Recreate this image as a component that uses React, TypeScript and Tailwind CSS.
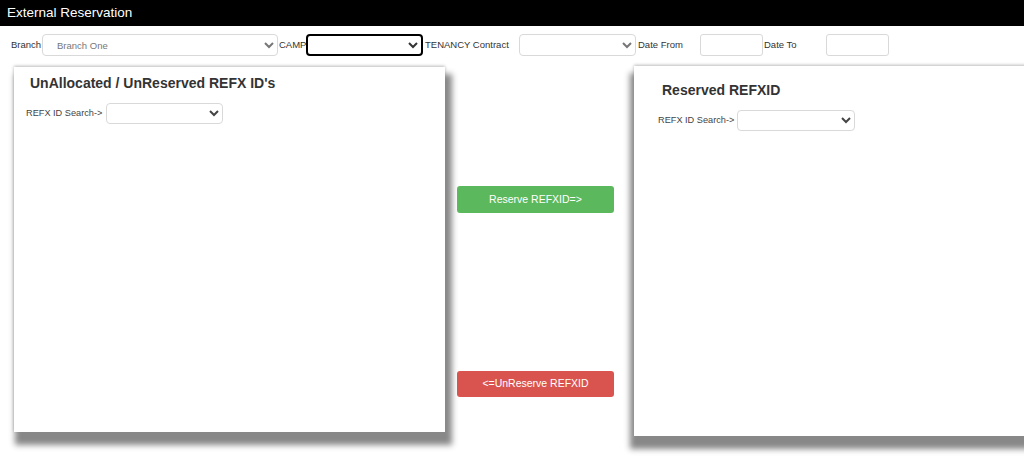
import React from 'react';

const selectCls =
  'h-[22px] rounded-[4px] border border-[#d9d9d9] bg-white text-[9.5px] text-[#777] px-[10px] outline-none';

const App: React.FC = () => {
  return (
    <div className="w-[1024px] h-[460px] overflow-hidden bg-white font-['Liberation_Sans',Arial,sans-serif] text-[#333]">
      <div className="h-[26px] bg-black text-white text-[13.5px] pl-[7px] flex items-center">External Reservation</div>

      {/* filters */}
      <div className="mt-[8px] flex items-center h-[22px] text-[9.5px] text-[#333]">
        <span className="ml-[11px] w-[31px]">Branch</span>
        <select className={`${selectCls} w-[236px]`} defaultValue="one">
          <option value="one">Branch One</option>
        </select>
        <span className="ml-[1px] w-[27px]">CAMP</span>
        <select className="h-[22px] w-[117px] rounded-[4px] border-2 border-black bg-white text-[9.5px] outline-none">
          <option></option>
        </select>
        <span className="ml-[2px] w-[94px]">TENANCY Contract</span>
        <select className={`${selectCls} w-[117px]`}>
          <option></option>
        </select>
        <span className="ml-[2px] w-[62px]">Date From</span>
        <input className="h-[22px] w-[63px] rounded-[3px] border border-[#d9d9d9] outline-none" />
        <span className="ml-[1px] w-[62px]">Date To</span>
        <input className="h-[22px] w-[63px] rounded-[3px] border border-[#d9d9d9] outline-none" />
      </div>

      {/* main area */}
      <div className="mt-[10px] flex items-start">
        <div className="ml-[14px] mt-[1px] w-[431px] h-[365px] shrink-0 bg-white shadow-[4px_10px_6px_3px_#888888,0_-1px_3px_#bbbbbb]">
          <h2 className="mt-[8px] ml-[16px] text-[14px] font-bold leading-[16px]">UnAllocated / UnReserved REFX ID's</h2>
          <div className="mt-[12px] ml-[12px] flex items-center text-[9.2px] text-[#444]">
            <span className="w-[80px]">REFX ID Search-&gt;</span>
            <select className="h-[21px] w-[117px] rounded-[4px] border border-[#d9d9d9] bg-white outline-none">
              <option></option>
            </select>
          </div>
        </div>

        <div className="w-[189px] shrink-0 flex flex-col pl-[12px] pt-[120px]">
          <button className="h-[27px] w-[157px] rounded-[3px] bg-[#5cb85c] text-white text-[10.5px]">Reserve REFXID=&gt;</button>
          <button className="mt-[158px] h-[26px] w-[157px] rounded-[3px] bg-[#d9534f] text-white text-[10.5px]">&lt;=UnReserve REFXID</button>
        </div>

        <div className="w-[420px] h-[370px] shrink-0 bg-white shadow-[-1px_10px_6px_3px_#888888,0_-1px_3px_#bbbbbb]">
          <h2 className="mt-[16px] ml-[28px] text-[14px] font-bold leading-[16px]">Reserved REFXID</h2>
          <div className="mt-[12px] ml-[24px] flex items-center text-[9.2px] text-[#444]">
            <span className="w-[79px]">REFX ID Search-&gt;</span>
            <select className="h-[21px] w-[118px] rounded-[4px] border border-[#d9d9d9] bg-white outline-none">
              <option></option>
            </select>
          </div>
        </div>
      </div>
    </div>
  );
};

export default App;
